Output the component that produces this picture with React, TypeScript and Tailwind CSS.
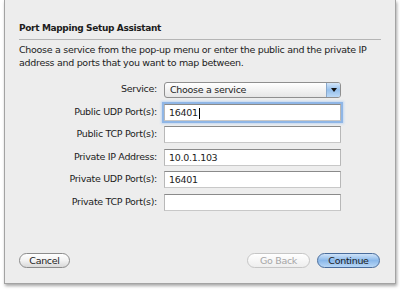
const fields = [
  { label: "Public UDP Port(s):", value: "16401", focused: true },
  { label: "Public TCP Port(s):", value: "" },
  { label: "Private IP Address:", value: "10.0.1.103" },
  { label: "Private UDP Port(s):", value: "16401" },
  { label: "Private TCP Port(s):", value: "" },
];

const font = { fontFamily: '"DejaVu Sans", Verdana, sans-serif' };

export default function App() {
  return (
    <div className="w-[400px] h-[290px] bg-white" style={font}>
      <div className="ml-[4px] w-[392px] h-[284px] bg-[#ededed] border-x border-b border-[#a3a3a3] shadow-[1px_2px_3px_rgba(0,0,0,0.35)] flex flex-col px-[14px] text-[#1c1c1c] tracking-[-0.3px]">
        <div className="pt-[22px] pb-[5px] text-[9px] font-bold leading-[12px] tracking-[-0.35px]">
          Port Mapping Setup Assistant
        </div>
        <div className="h-px bg-[#b5b5b5]" />
        <p className="mt-[3px] text-[9.5px] leading-[13px]">
          Choose a service from the pop-up menu or enter the public and the private IP address and ports that you want to map between.
        </p>

        <div className="mt-[12px] flex flex-col gap-[5.5px] text-[9.5px]">
          <div className="flex items-center h-[17px]">
            <div className="w-[139px] text-right pr-[1px]">Service:</div>
            <div className="ml-[6px] w-[177px] h-[16px] flex rounded-[3px] border border-[#8f8f8f] bg-gradient-to-b from-white to-[#e6e6e6] overflow-hidden">
              <span className="flex-1 pl-[5px] leading-[14px]">Choose a service</span>
              <span className="w-[14px] flex items-center justify-center bg-gradient-to-b from-[#d4e6f8] via-[#96c0ec] to-[#bcd9f6] border-l border-[#8aa9cc]">
                <svg width="6" height="4" viewBox="0 0 6 4">
                  <path d="M0 0h6L3 4z" fill="#111" />
                </svg>
              </span>
            </div>
          </div>
          {fields.map((f) => (
            <div key={f.label} className="flex items-center h-[17px]">
              <div className="w-[139px] text-right pr-[1px]">{f.label}</div>
              <div
                className={
                  "ml-[6px] w-[177px] h-[17px] bg-white border border-t-[#8a8a8a] border-x-[#b8b8b8] border-b-[#c8c8c8] pl-[4px] leading-[15px] " +
                  (f.focused ? "shadow-[0_0_0_2px_#8fb6e6,0_0_2px_3px_#c3d8f2]" : "")
                }
              >
                {f.value}
                {f.focused && <span className="inline-block w-px h-[11px] bg-black align-middle ml-[1px]" />}
              </div>
            </div>
          ))}
        </div>

        <div className="mt-auto mb-[15px] flex items-center text-[9.5px]">
          <button className="w-[51px] h-[15px] rounded-full border border-[#8c8c8c] bg-gradient-to-b from-white via-[#f2f2f2] to-[#d9d9d9] leading-[13px]">
            Cancel
          </button>
          <div className="flex-1" />
          <button className="w-[63px] h-[15px] rounded-full border border-[#c6c6c6] bg-gradient-to-b from-white to-[#eeeeee] text-[#a6a6a6] leading-[13px]">
            Go Back
          </button>
          <button className="ml-[7px] w-[63px] h-[15px] rounded-full border border-[#4a6d9c] bg-gradient-to-b from-[#cfe3f8] via-[#8ab8ea] to-[#b8d7f6] leading-[13px]">
            Continue
          </button>
          <div className="w-[1px]" />
        </div>
      </div>
    </div>
  );
}
